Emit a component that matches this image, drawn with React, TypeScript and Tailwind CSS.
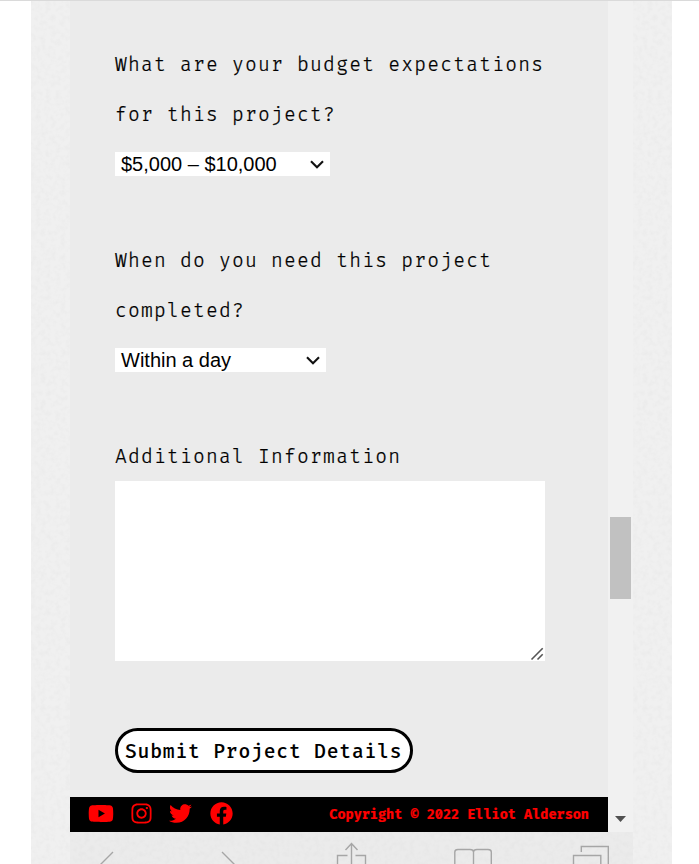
import React from "react";
import { FaYoutube, FaInstagram, FaTwitter, FaFacebook } from "react-icons/fa";

const mono = "font-['Fira_Code','Fira_Mono','DejaVu_Sans_Mono',monospace]";

function Grain({ id, className }: { id: string; className: string }) {
  return (
    <svg className={className} aria-hidden="true">
      <filter id={id} x="0" y="0" width="100%" height="100%">
        <feTurbulence type="fractalNoise" baseFrequency="0.2" numOctaves={3} seed={4} />
        <feColorMatrix values="0 0 0 0 0.5  0 0 0 0 0.5  0 0 0 0 0.5  0.2 0 0 0 -0.08" />
      </filter>
      <rect width="100%" height="100%" filter={`url(#${id})`} />
    </svg>
  );
}

function Line({ children }: { children: string }) {
  return (
    <span className={`${mono} block h-[50px] text-[19.2px] leading-[51px] font-light tracking-[1.2px] whitespace-pre text-black [-webkit-text-stroke:0.2px_black]`}>
      {children}
    </span>
  );
}

function Select({ value, className }: { value: string; className: string }) {
  return (
    <div className={`flex h-6 items-center justify-between bg-white pr-[5px] pl-1.5 font-['Liberation_Sans',Arial,sans-serif] text-[20px] leading-6 text-black ${className}`}>
      <span>{value}</span>
      <svg className="h-4 w-4" viewBox="0 0 16 16" fill="none" stroke="#111" strokeWidth="2.1">
        <path d="M2 5.2 8 11.2 14 5.2" />
      </svg>
    </div>
  );
}

export default function App() {
  return (
    <div className="h-[864px] w-[699px] overflow-hidden border-t border-[#dadada] bg-white">
      <div className="ml-[31px] flex h-[863px] w-[641px] bg-[#f0f0f0]">
        <div className="w-[39px]"><Grain id="grain-left" className="h-full w-full" /></div>
        <div className="w-[563px]">
          <div className="flex h-[831px]">
            <div className="flex w-[538px] flex-col bg-[#ebebeb]">
              <form className="flex h-[796px] flex-col items-start pt-[39px] pl-[45px]">
                <label>
                  <Line>What are your budget expectations</Line>
                  <Line>for this project?</Line>
                </label>
                <Select value="$5,000 – $10,000" className="mt-3 w-[215px]" />
                <label className="mt-[60px]">
                  <Line>When do you need this project</Line>
                  <Line>completed?</Line>
                </label>
                <Select value="Within a day" className="mt-3 w-[211px]" />
                <label className="mt-[60px]">
                  <Line>Additional Information</Line>
                </label>
                <div className="-mt-px flex h-[180px] w-[430px] items-end justify-end bg-white">
                  <svg className="h-[14px] w-[15px]" viewBox="0 0 15 14" stroke="#555" strokeWidth="1.6">
                    <path d="M1.5 12.5 12.7 1.3M7.5 12.5 12.7 7.3" />
                  </svg>
                </div>
                <button type="button" className={`${mono} mt-[67px] h-[45px] w-[298px] rounded-full border-3 border-black bg-white pt-[3px] pl-[7px] text-left text-[19.2px] font-medium tracking-[0.8px] whitespace-nowrap text-black`}>
                  Submit Project Details
                </button>
              </form>
              <footer className="flex h-[35px] items-center justify-between bg-black pr-[19px] pl-[18px] text-[#f00]">
                <div className="flex items-center">
                  <FaYoutube className="h-[23px] w-[26px] -translate-y-px" />
                  <FaInstagram className="ml-[16px] h-[23px] w-[23px] -translate-y-px" />
                  <FaTwitter className="ml-[16px] h-[23px] w-[23px] -translate-y-px" />
                  <FaFacebook className="ml-[18px] h-[23px] w-[23px] -translate-y-px" />
                </div>
                <span className={`${mono} pt-[2px] text-[13.2px] font-bold whitespace-nowrap [-webkit-text-stroke:0.2px_#f00]`}>
                  Copyright © 2022 Elliot Alderson
                </span>
              </footer>
            </div>
            <div className="flex w-[25px] flex-col items-center bg-[#f1f1f1]">
              <div className="mt-[516px] h-[82px] w-[21px] bg-[#c1c1c1]" />
              <svg className="mt-[217px] h-[6px] w-[11px]" viewBox="0 0 11 6"><path d="M0 0h11L5.5 6Z" fill="#505050" /></svg>
            </div>
          </div>
          <div className="relative h-8 overflow-hidden bg-[#ebebeb]">
            <Grain id="grain-bottom" className="absolute inset-0 h-full w-full" />
            <svg className="relative h-8 w-[563px]" viewBox="70 832 563 32" fill="none" stroke="#a6a6a6" strokeWidth="1.4">
              <path d="M113 852 99 866M222 852 236 866" />
              <path d="M347.5 855.5H337.5V866M355.5 855.5H365.5V866M351.5 866V844M345.5 850 351.5 843.5 357.5 850" />
              <path d="M454.8 866V852Q454.8 849.5 458 849.5H470Q473.5 849.5 473.5 852V866M473.5 852Q473.5 849.5 477 849.5H488Q491.3 849.5 491.3 852V866" />
              <path d="M581.3 852V846.5H608.3V866M573.5 866V855.5H600.8V866" />
            </svg>
          </div>
        </div>
        <div className="w-[39px]"><Grain id="grain-right" className="h-full w-full" /></div>
      </div>
    </div>
  );
}
